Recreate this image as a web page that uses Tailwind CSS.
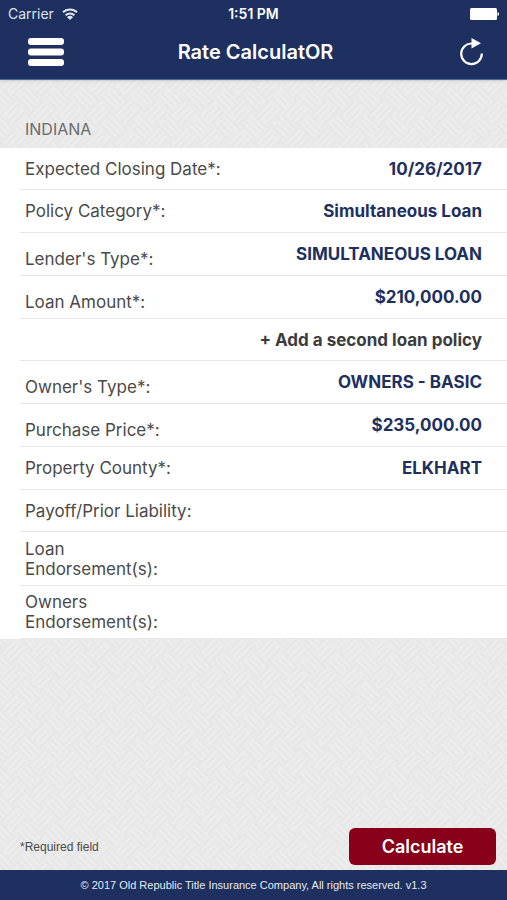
<!DOCTYPE html>
<html lang="en">
<head>
  <meta charset="UTF-8">
  <meta name="viewport" content="width=device-width, initial-scale=1.0">
  <title>Rate CalculatOR</title>
  <script src="https://cdn.jsdelivr.net/npm/@tailwindcss/browser@4"></script>
</head>
<body class="relative isolate min-h-screen flex flex-col bg-[#eaeaea] font-['Inter','Liberation_Sans',sans-serif] text-[#4a4a4a]">

  <!-- woven background -->
  <svg class="absolute inset-0 -z-10 w-full h-full" aria-hidden="true">
    <defs>
      <pattern id="weave" width="40" height="40" patternUnits="userSpaceOnUse" patternTransform="rotate(45)">
        <g fill="none" stroke="#e3e3e3" stroke-width="1">
          <path d="M0 2h22M0 7h17M3 12h17M0 17h20M20 22h20M24 27h16M20 32h17M20 37h22" />
          <path d="M22 0v20M27 3v17M32 0v17M37 0v20M2 20v20M7 20v16M12 24v16M17 20v20" />
        </g>
        <g fill="none" stroke="#efefef" stroke-width="1">
          <path d="M0 4h20M2 9h16M0 14h20M20 24h20M22 29h16M20 34h20" />
          <path d="M24 0v20M29 2v16M34 0v20M4 20v20M9 22v16M14 20v20" />
        </g>
      </pattern>
    </defs>
    <rect width="100%" height="100%" fill="url(#weave)" />
  </svg>

  <header class="bg-[#1d305f] text-white border-b border-[#4f6a92] shadow">
    <div class="grid grid-cols-3 items-center h-7 px-2 text-sm">
      <div class="flex items-center gap-2 text-[#dfe4ee]">
        <span>Carrier</span>
        <svg class="w-4 h-3" viewBox="0 0 16 12" fill="none" stroke="currentColor" stroke-width="2">
          <path d="M1 4.3a10 10 0 0 1 14 0M3.6 7.200a6.3 6.3 0 0 1 8.8 0" />
          <path d="M8 12 5 9.200a4 4 0 0 1 6 0z" fill="currentColor" stroke="none" />
        </svg>
      </div>
      <span class="text-center font-semibold">1:51 PM</span>
      <svg class="justify-self-end w-[30px] h-3" viewBox="0 0 30 12" fill="#fff">
        <rect x="1" y="0" width="27" height="12" rx="1.500" />
        <path d="M28.500 4c2 .5 2 3.500 0 4z" />
      </svg>
    </div>
    <div class="grid grid-cols-[1fr_auto_1fr] items-center h-[51px] pl-7 pr-6 pb-1">
      <button type="button" aria-label="Menu" class="justify-self-start">
        <svg class="w-9 h-7" viewBox="0 0 36 28" fill="#fff">
          <rect width="36" height="7" rx="3" />
          <rect y="10.500" width="36" height="7" rx="3" />
          <rect y="21" width="36" height="7" rx="3" />
        </svg>
      </button>
      <h1 class="text-xl font-semibold">Rate CalculatOR</h1>
      <button type="button" aria-label="Reset" class="justify-self-end">
        <svg class="w-6 h-7" viewBox="0 0 24 28" fill="none">
          <path d="M13 5.500A10.300 10.300 0 1 0 22.800 15.500" stroke="#fff" stroke-width="2.200" />
          <path d="M12.500 0 22 5.300 12.500 10.500z" fill="#fff" />
        </svg>
      </button>
    </div>
  </header>

  <main class="flex-1 flex flex-col">
    <h2 class="h-[68px] pt-[37px] pl-[25px] text-base leading-6 text-[#6b6b6b]">INDIANA</h2>

    <form id="rateForm" class="bg-white pl-5 text-[17px] leading-5">
      <div class="flex items-center h-[42px] pl-[5px] pr-[25px] border-b border-[#e6e6e6]">
        <label for="closingDate">Expected Closing Date*:</label>
        <input id="closingDate" type="text" value="10/26/2017" class="flex-1 min-w-0 text-right font-bold text-[#1d305f] outline-none">
      </div>
      <div class="flex items-center h-[43px] pl-[5px] pr-[25px] border-b border-[#e6e6e6]">
        <label for="category">Policy Category*:</label>
        <select id="category" class="flex-1 min-w-0 appearance-none text-right font-bold text-[#1d305f] outline-none">
          <option>Simultaneous Loan</option>
        </select>
      </div>
      <div class="flex items-center h-[43px] pl-[5px] pr-[25px] border-b border-[#e6e6e6]">
        <label for="lenderType" class="pt-[10px]">Lender's Type*:</label>
        <select id="lenderType" class="flex-1 min-w-0 appearance-none text-right font-bold text-[#1d305f] outline-none">
          <option>SIMULTANEOUS LOAN</option>
        </select>
      </div>
      <div class="flex items-center h-[43px] pl-[5px] pr-[25px] border-b border-[#e6e6e6]">
        <label for="loanAmount" class="pt-[10px]">Loan Amount*:</label>
        <input id="loanAmount" type="text" value="$210,000.00" class="flex-1 min-w-0 text-right font-bold text-[#1d305f] outline-none">
      </div>
      <div class="flex items-center justify-end h-[42px] pr-[25px] border-b border-[#e6e6e6]">
        <button type="button" class="font-bold text-[#3c3c3c]">+ Add a second loan policy</button>
      </div>
      <div class="flex items-center h-[43px] pl-[5px] pr-[25px] border-b border-[#e6e6e6]">
        <label for="ownerType" class="pt-[10px]">Owner's Type*:</label>
        <select id="ownerType" class="flex-1 min-w-0 appearance-none text-right font-bold text-[#1d305f] outline-none">
          <option>OWNERS - BASIC</option>
        </select>
      </div>
      <div class="flex items-center h-[43px] pl-[5px] pr-[25px] border-b border-[#e6e6e6]">
        <label for="price" class="pt-[10px]">Purchase Price*:</label>
        <input id="price" type="text" value="$235,000.00" class="flex-1 min-w-0 text-right font-bold text-[#1d305f] outline-none">
      </div>
      <div class="flex items-center h-[43px] pl-[5px] pr-[25px] border-b border-[#e6e6e6]">
        <label for="county">Property County*:</label>
        <select id="county" class="flex-1 min-w-0 appearance-none text-right font-bold text-[#1d305f] outline-none">
          <option>ELKHART</option>
        </select>
      </div>
      <div class="flex items-center h-[42px] pl-[5px] pr-[25px] border-b border-[#e6e6e6]">
        <label for="payoff">Payoff/Prior Liability:</label>
        <input id="payoff" type="text" class="flex-1 min-w-0 text-right font-bold text-[#1d305f] outline-none">
      </div>
      <div class="flex items-center h-[54px] pl-[5px] pr-[25px] border-b border-[#e6e6e6]">
        <label for="loanEndorsements">Loan<br>Endorsement(s):</label>
        <input id="loanEndorsements" type="text" class="flex-1 min-w-0 text-right font-bold text-[#1d305f] outline-none">
      </div>
      <div class="flex items-center h-[53px] pl-[5px] pr-[25px] border-b border-[#e6e6e6]">
        <label for="ownersEndorsements">Owners<br>Endorsement(s):</label>
        <input id="ownersEndorsements" type="text" class="flex-1 min-w-0 text-right font-bold text-[#1d305f] outline-none">
      </div>
    </form>

    <div class="mt-auto flex items-center justify-between pl-5 pr-[11px] pb-[5px]">
      <p class="font-['Liberation_Sans',sans-serif] text-xs">*Required field</p>
      <button type="submit" form="rateForm" class="w-[147px] h-[37px] rounded-md bg-[#89001a] text-lg font-semibold text-white">Calculate</button>
    </div>
  </main>

  <footer class="h-[30px] bg-[#1d305f] text-center font-['Liberation_Sans',sans-serif] text-[11px] leading-[30px] text-[#e6eaf2]">
    © 2017 Old Republic Title Insurance Company, All rights reserved. v1.3
  </footer>

</body>
</html>
